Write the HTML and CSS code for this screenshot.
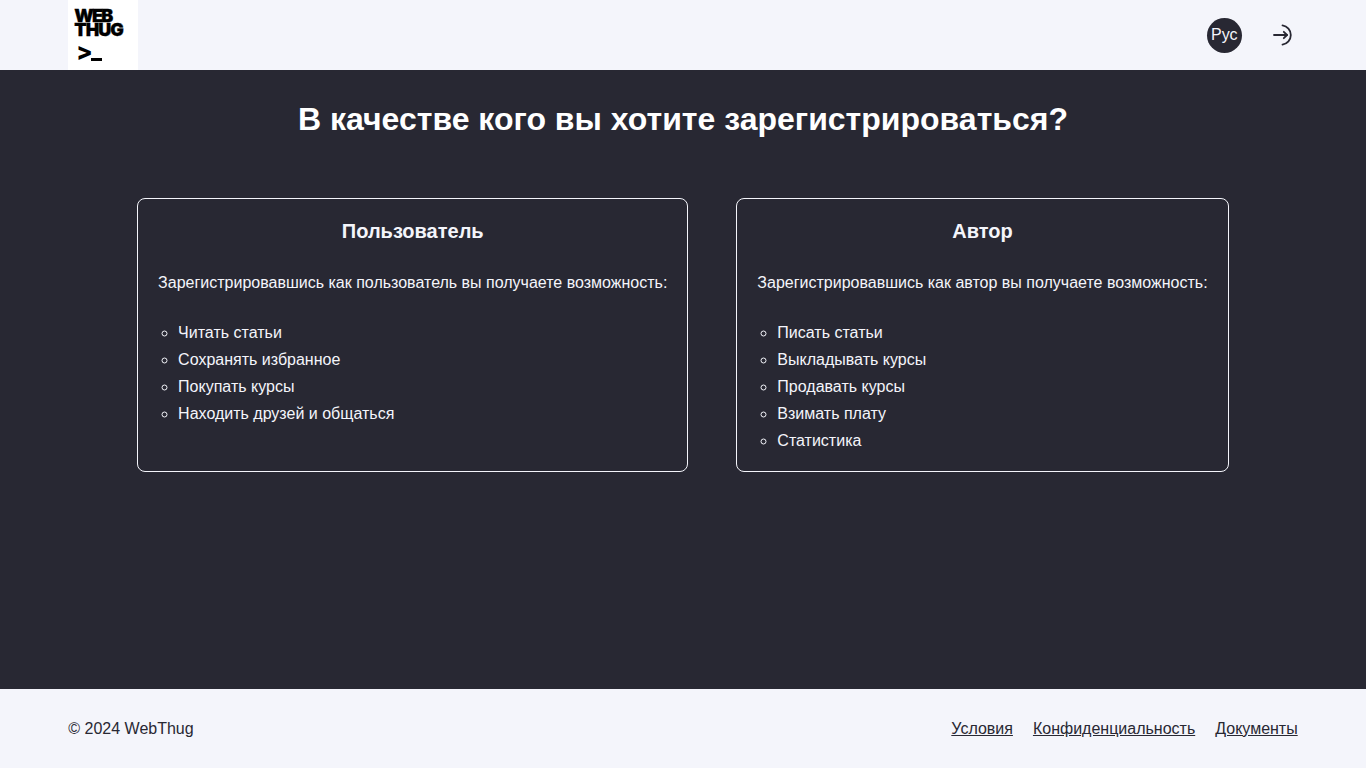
FILE: index.html
```html
<!DOCTYPE html>
<html lang="ru">
<head>
    <meta charset="UTF-8">
    <meta name="viewport" content="width=device-width, initial-scale=1.0">
    <title>WebThug</title>
    <link rel="stylesheet" href="styles.css">
</head>

<body>
    <header class="header">
        <a class="logo" href="#">
            <span class="logo-word logo-web">WEB</span>
            <span class="logo-word logo-thug">THUG</span>
            <span class="logo-prompt">&gt;<span class="logo-cursor"></span></span>
        </a>
        <div class="header-actions">
            <button class="lang-btn" type="button">Рус</button>
            <a class="login-link" href="#" aria-label="Войти">
                <svg width="24" height="24" viewBox="0 0 24 24" fill="none" stroke="#282833" stroke-width="1.8" stroke-linecap="round" stroke-linejoin="round">
                    <path d="M3 12h13"></path>
                    <path d="M12.8 8.8l3.2 3.2-3.2 3.2"></path>
                    <path d="M11.5 2.4a9.7 9.7 0 0 1 0 19.2"></path>
                </svg>
            </a>
        </div>
    </header>

    <main class="main">
        <h1>В качестве кого вы хотите зарегистрироваться?</h1>
        <div class="cards">
            <section class="card">
                <h2>Пользователь</h2>
                <p>Зарегистрировавшись как пользователь вы получаете возможность:</p>
                <ul>
                    <li>Читать статьи</li>
                    <li>Сохранять избранное</li>
                    <li>Покупать курсы</li>
                    <li>Находить друзей и общаться</li>
                </ul>
            </section>
            <section class="card">
                <h2>Автор</h2>
                <p>Зарегистрировавшись как автор вы получаете возможность:</p>
                <ul>
                    <li>Писать статьи</li>
                    <li>Выкладывать курсы</li>
                    <li>Продавать курсы</li>
                    <li>Взимать плату</li>
                    <li>Статистика</li>
                </ul>
            </section>
        </div>
    </main>

    <footer class="footer">
        <span>© 2024 WebThug</span>
        <nav class="footer-links">
            <a href="#">Условия</a>
            <a href="#">Конфиденциальность</a>
            <a href="#">Документы</a>
        </nav>
    </footer>
</body>
</html>
```

FILE: styles.css
```css
* {
    box-sizing: border-box;
}

body {
    font-family: "Liberation Sans", Arial, sans-serif;
    margin: 0;
    min-height: 768px;
    display: flex;
    flex-direction: column;
    background-color: #282833;
    color: #f4f5fb;
    font-size: 16px;
}

.header {
    height: 70px;
    padding: 0 5%;
    display: flex;
    justify-content: space-between;
    align-items: center;
    background-color: #f4f5fb;
}

.logo {
    width: 70px;
    height: 70px;
    padding: 9px 0 0 6px;
    display: flex;
    flex-direction: column;
    background-color: #fff;
    color: #000;
    text-decoration: none;
    font-family: "Inter", "Liberation Sans", sans-serif;
    font-weight: 900;
}

.logo-word {
    font-size: 18px;
    line-height: 14px;
    -webkit-text-stroke: 0.3px #000;
}

.logo-web {
    letter-spacing: -1.8px;
}

.logo-thug {
    letter-spacing: -1px;
}

.logo-prompt {
    margin: 3px 0 0 2px;
    display: flex;
    align-items: flex-end;
    font-size: 24px;
    line-height: 24px;
    font-weight: 800;
}

.logo-cursor {
    width: 11px;
    height: 3px;
    margin: 0 0 3px -2px;
    background-color: #000;
}

.header-actions {
    display: flex;
    align-items: center;
    gap: 29px;
    padding-right: 3px;
}

.lang-btn {
    width: 35px;
    height: 35px;
    padding: 0;
    border: none;
    border-radius: 50%;
    background-color: #282833;
    color: #f4f5fb;
    font-family: inherit;
    font-size: 16px;
    cursor: pointer;
}

.login-link {
    display: flex;
}

.main {
    flex: 1;
    padding: 31px 10% 0;
}

h1 {
    margin: 0 0 60px;
    font-size: 32px;
    line-height: 37px;
    font-weight: bold;
    text-align: center;
    color: #fff;
}

.cards {
    display: flex;
    justify-content: center;
    align-items: stretch;
    gap: 48px;
    padding-right: 0.3px;
}

.card {
    flex: none;
    padding: 20px 20px 17px;
    border: 1px solid #f4f5fb;
    border-radius: 8px;
}

.card h2 {
    margin: 0 0 28px;
    font-size: 20px;
    line-height: 24px;
    font-weight: bold;
    text-align: center;
}

.card p {
    margin: 0 0 25px;
    line-height: 23px;
}

.card ul {
    margin: 0;
    padding-left: 20px;
    list-style-type: circle;
}

.card li {
    line-height: 27px;
}

.footer {
    height: 79px;
    padding: 0 5%;
    display: flex;
    justify-content: space-between;
    align-items: center;
    background-color: #f4f5fb;
    color: #282833;
}

.footer-links {
    display: flex;
    gap: 20px;
}

.footer-links a {
    color: #282833;
}
```
